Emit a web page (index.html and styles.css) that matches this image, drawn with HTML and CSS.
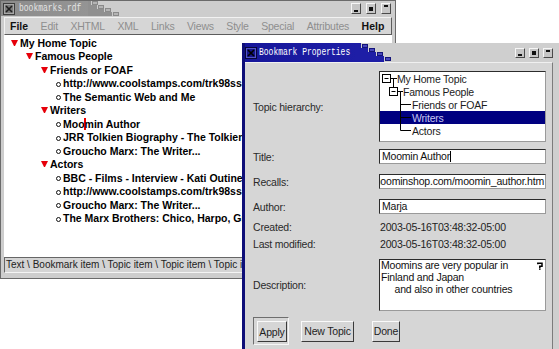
FILE: index.html
```html
<!DOCTYPE html>
<html lang="en">
<head>
    <meta charset="UTF-8">
    <title>bookmarks.rdf</title>
    <link rel="stylesheet" href="styles.css">
</head>
<body>
    <!-- main window -->
    <div class="window main-win">
        <div class="titlebar">
            <div class="caption">
                <svg class="close-box" width="12" height="12" viewBox="0 0 12 12">
                    <rect x="0.5" y="0.5" width="11" height="11" fill="#7c7c7c" stroke="#3e3e3e"/>
                    <rect x="1.5" y="1.5" width="9" height="9" fill="none" stroke="#a8a8a8"/>
                    <path d="M3 3L9 9M9 3L3 9" stroke="#1e1e1e" stroke-width="1.6"/>
                </svg>
                <span class="title">bookmarks.rdf</span>
            </div>
            <svg class="steps" width="32" height="15" viewBox="0 0 32 15">
                <rect width="32" height="15" fill="#cdcdcd"/>
                <path d="M0 0H3V4H9V8H16V11H24V15H0Z" fill="#909090"/>
                <rect x="4.5" y="0.5" width="5" height="3" fill="#b4b4b4" stroke="#8a8a8a"/>
                <rect x="10.5" y="4.5" width="5" height="3" fill="#b4b4b4" stroke="#8a8a8a"/>
                <rect x="17.5" y="7.5" width="5" height="3" fill="#b4b4b4" stroke="#8a8a8a"/>
                <rect x="25.5" y="11.5" width="5" height="3" fill="#b4b4b4" stroke="#8a8a8a"/>
            </svg>
            <div class="fill">
                <span class="tb-btn min"></span>
                <span class="tb-btn max"></span>
                <span class="tb-btn shade"></span>
            </div>
        </div>
        <div class="frame">
            <div class="menubar">
                <span class="menu on">File</span>
                <span class="menu">Edit</span>
                <span class="menu">XHTML</span>
                <span class="menu">XML</span>
                <span class="menu">Links</span>
                <span class="menu">Views</span>
                <span class="menu">Style</span>
                <span class="menu">Special</span>
                <span class="menu">Attributes</span>
                <span class="menu on">Help</span>
            </div>
            <div class="content">
                <ul class="tree">
                    <li><span class="row"><i class="tri"></i>My Home Topic</span>
                        <ul>
                            <li><span class="row"><i class="tri"></i>Famous People</span>
                                <ul>
                                    <li><span class="row"><i class="tri"></i>Friends or FOAF</span>
                                        <ul>
                                            <li><span class="row"><i class="dot"></i>http://www.coolstamps.com/trk98ss-sem.htm</span></li>
                                            <li><span class="row"><i class="dot"></i>The Semantic Web and Me</span></li>
                                        </ul>
                                    </li>
                                    <li><span class="row"><i class="tri"></i>Writers</span>
                                        <ul>
                                            <li><span class="row"><i class="dot"></i>Moo<span class="caret"></span>min Author</span></li>
                                            <li><span class="row"><i class="dot"></i>JRR Tolkien Biography - The Tolkien Society</span></li>
                                            <li><span class="row"><i class="dot"></i>Groucho Marx: The Writer...</span></li>
                                        </ul>
                                    </li>
                                    <li><span class="row"><i class="tri"></i>Actors</span>
                                        <ul>
                                            <li><span class="row"><i class="dot"></i>BBC - Films - Interview - Kati Outinen</span></li>
                                            <li><span class="row"><i class="dot"></i>http://www.coolstamps.com/trk98ss-act.htm</span></li>
                                            <li><span class="row"><i class="dot"></i>Groucho Marx: The Writer...</span></li>
                                            <li><span class="row"><i class="dot"></i>The Marx Brothers: Chico, Harpo, Groucho</span></li>
                                        </ul>
                                    </li>
                                </ul>
                            </li>
                        </ul>
                    </li>
                </ul>
            </div>
            <div class="statusbar">Text \ Bookmark item \ Topic item \ Topic item \ Topic item \ Text</div>
        </div>
    </div>

    <!-- dialog -->
    <div class="window dialog">
        <div class="titlebar">
            <div class="caption">
                <svg class="close-box" width="12" height="12" viewBox="0 0 12 12">
                    <rect x="0.5" y="0.5" width="11" height="11" fill="#16168c" stroke="#07073a"/>
                    <rect x="1.5" y="1.5" width="9" height="9" fill="none" stroke="#5454c4"/>
                    <path d="M3 3L9 9M9 3L3 9" stroke="#000" stroke-width="1.6"/>
                </svg>
                <span class="title">Bookmark Properties</span>
            </div>
            <svg class="steps" width="36" height="19" viewBox="0 0 36 19">
                <rect width="36" height="19" fill="#cfcfcf"/>
                <path d="M0 0H4V5H11V9H19V13H27V19H0Z" fill="#1e1ea6"/>
                <rect x="5.5" y="1.5" width="5" height="3" fill="#4848bc" stroke="#14147a"/>
                <rect x="12.5" y="5.5" width="5" height="3" fill="#4848bc" stroke="#14147a"/>
                <rect x="20.5" y="9.5" width="5" height="3" fill="#4848bc" stroke="#14147a"/>
                <rect x="28.5" y="14.5" width="5" height="3" fill="#4848bc" stroke="#14147a"/>
            </svg>
            <div class="fill">
                <span class="tb-btn min"></span>
                <span class="tb-btn max"></span>
                <span class="tb-btn shade"></span>
            </div>
        </div>
        <div class="dlg-body">
            <div class="field first">
                <label>Topic hierarchy:</label>
                <div class="topic-tree">
                    <div class="node">
                        <svg width="17" height="13" viewBox="0 0 17 13">
                            <rect x="2.5" y="2.5" width="8" height="8" fill="#fff" stroke="#000"/>
                            <path d="M4.5 6.5H8.5M11 6.5H17M13.5 6.5V13" stroke="#000"/>
                        </svg>My Home Topic
                    </div>
                    <div class="node">
                        <svg width="23" height="13" viewBox="0 0 23 13">
                            <path d="M13.5 0V2.5" stroke="#000"/>
                            <rect x="9.5" y="2.5" width="8" height="8" fill="#fff" stroke="#000"/>
                            <path d="M11.5 6.5H15.5M18 6.5H23M20.5 6.5V13" stroke="#000"/>
                        </svg>Famous People
                    </div>
                    <div class="node">
                        <svg width="32" height="13" viewBox="0 0 32 13">
                            <path d="M20.5 0V13M20.5 6.5H31" stroke="#000"/>
                        </svg>Friends or FOAF
                    </div>
                    <div class="node sel">
                        <svg width="32" height="13" viewBox="0 0 32 13">
                            <path d="M20.5 0V13M20.5 6.5H31" stroke="#000"/>
                        </svg>Writers
                    </div>
                    <div class="node">
                        <svg width="32" height="13" viewBox="0 0 32 13">
                            <path d="M20.5 0V6.5H31" stroke="#000" fill="none"/>
                        </svg>Actors
                    </div>
                </div>
            </div>
            <div class="field near">
                <label>Title:</label>
                <div class="entry">Moomin Author<span class="ibeam"></span></div>
            </div>
            <div class="field">
                <label>Recalls:</label>
                <div class="entry scrolled"><span>moominshop.com/moomin_author.htm</span></div>
            </div>
            <div class="field">
                <label>Author:</label>
                <div class="entry">Marja</div>
            </div>
            <div class="field info near-s">
                <label>Created:</label>
                <div class="value">2003-05-16T03:48:32-05:00</div>
            </div>
            <div class="field info tight">
                <label>Last modified:</label>
                <div class="value">2003-05-16T03:48:32-05:00</div>
            </div>
            <div class="field mid">
                <label>Description:</label>
                <div class="memo">
<div class="memo-text">Moomins are very popular in
Finland and Japan
     and also in other countries</div>
                    <svg class="memo-mark" width="6" height="8" viewBox="0 0 6 8">
                        <path d="M0.8 2.2V1.2H5V4.2H2.8V6" stroke="#000" stroke-width="1.5" fill="none"/>
                        <rect x="2" y="6.4" width="1.6" height="1.4" fill="#000"/>
                    </svg>
                </div>
            </div>
            <div class="buttons">
                <div class="default-frame"><button class="btn apply">Apply</button></div>
                <button class="btn new-topic">New Topic</button>
                <button class="btn done">Done</button>
            </div>
        </div>
    </div>
</body>
</html>
```

FILE: styles.css
```css
/* page */
body {
    margin: 0;
    width: 559px;
    height: 349px;
    position: relative;
    overflow: hidden;
    background: #fff;
    font-family: "Liberation Sans", Arial, sans-serif;
    font-size: 10.5px;
    letter-spacing: -0.2px;
    color: #222;
}

/* window chrome */
.window {
    position: absolute;
    box-sizing: border-box;
    display: flex;
    flex-direction: column;
}
.main-win {
    left: 0;
    top: 0;
    width: 396px;
    height: 279px;
    border: 1px solid #6a6a6a;
    background: #cdcdcd;
}
.dialog {
    left: 242px;
    top: 43px;
    width: 317px;
    height: 316px;
    border-left: 3px solid #0e0e78;
    background: #cfcfcf;
}
.titlebar {
    display: flex;
    flex-shrink: 0;
}
.main-win .titlebar { height: 15px; }
.dialog .titlebar { height: 19px; }

.caption {
    display: flex;
    align-items: center;
    overflow: hidden;
}
.main-win .caption {
    width: 85px;
    padding-left: 2px;
    background: linear-gradient(to right, #8c8c8c, #949494);
    color: #e4e4e4;
}
.dialog .caption {
    width: 112px;
    background: linear-gradient(to right, #16169a, #1e1ea6);
    color: #fff;
}
.close-box { flex-shrink: 0; }
.title {
    font-family: "Liberation Mono", monospace;
    font-size: 10px;
    letter-spacing: 0;
    white-space: nowrap;
    transform: scaleX(0.8);
    transform-origin: left center;
}
.main-win .title { margin-left: 4px; }
.dialog .title { margin-left: 2px; }
.steps { flex-shrink: 0; }

.fill {
    flex: 1;
    display: flex;
    justify-content: flex-end;
    align-items: center;
    background: #cdcdcd;
}
.main-win .fill { gap: 5px; padding-right: 4px; }
.dialog .fill { gap: 4px; padding-right: 6px; background: #cfcfcf; }

/* little buttons at the right of a title bar */
.tb-btn {
    width: 10px;
    height: 11px;
    box-sizing: border-box;
    border: 1px solid;
    border-color: #f6f6f6 #4a4a4a #4a4a4a #f6f6f6;
    background: #c6c6c6;
    display: flex;
    justify-content: center;
}
.dialog .tb-btn { height: 10px; }
.tb-btn::after {
    content: "";
    width: 4px;
    height: 2px;
    background: #111;
}
.tb-btn.min { align-items: flex-end; padding-bottom: 1px; }
.tb-btn.max { align-items: center; }
.tb-btn.max::after { height: 4px; }
.tb-btn.shade { align-items: flex-start; padding-top: 1px; }

/* main window body */
.frame {
    flex: 1;
    display: flex;
    flex-direction: column;
    padding: 1px 3px 5px;
}
.menubar {
    height: 18px;
    box-sizing: border-box;
    display: flex;
    align-items: center;
    gap: 12.5px;
    padding-left: 5px;
    border: 1px solid;
    border-color: #f2f2f2 #5c5c5c #5c5c5c #f2f2f2;
    background: #d6d6d6;
    overflow: hidden;
    white-space: nowrap;
}
.menu { color: #8e8e8e; }
.menu.on { color: #111; font-weight: bold; letter-spacing: 0; }

.content {
    height: 222px;
    background: #fff;
    overflow: hidden;
}
.tree,
.tree ul {
    list-style: none;
    margin: 0;
    padding: 0 0 0 15px;
}
.tree {
    padding: 1px 0 0 7px;
    font-weight: bold;
    font-size: 10.5px;
    letter-spacing: 0;
    color: #000;
}
.row {
    display: flex;
    align-items: center;
    height: 13.5px;
    white-space: nowrap;
}
.tri {
    width: 1px;
    height: 0;
    border-left: 3px solid transparent;
    border-right: 3px solid transparent;
    border-top: 6px solid #e6000a;
    margin-right: 2px;
    flex-shrink: 0;
}
.dot {
    width: 5px;
    height: 5px;
    box-sizing: border-box;
    border: 1px solid #111;
    border-radius: 50%;
    margin: 2px 2px 0 0;
    flex-shrink: 0;
}
.caret {
    display: inline-block;
    width: 2px;
    height: 12px;
    margin: 0 -1px;
    background: #e00;
}

.statusbar {
    height: 16px;
    box-sizing: border-box;
    border: 1px solid;
    border-color: #666 #f4f4f4 #f4f4f4 #666;
    background: #d4d4d4;
    padding-left: 1px;
    line-height: 14px;
    font-size: 10px;
    letter-spacing: 0;
    color: #222;
    white-space: nowrap;
    overflow: hidden;
}

/* dialog body */
.dlg-body {
    flex: 1;
    margin-right: 6px;
    padding: 8px 6px 0 8px;
    background: #d6d6d6;
    border-top: 1px solid #f0f0f0;
    border-right: 1px solid #7c7c7c;
}
.field {
    display: flex;
    align-items: center;
    margin-top: 10px;
}
.field.first { margin-top: 0; }
.field.near { margin-top: 7px; }
.field.near-s { margin-top: 6px; }
.field.tight { margin-top: 3px; }
.field.mid { margin-top: 8px; }
.field label {
    width: 126px;
    flex-shrink: 0;
    color: #2a2a2a;
}
.field.info { height: 14px; }

.topic-tree,
.entry,
.memo {
    width: 167px;
    box-sizing: border-box;
    border: 1px solid;
    border-color: #2c2c2c #9a9a9a #9a9a9a #2c2c2c;
    background: #fff;
    overflow: hidden;
}
.topic-tree { height: 71px; }
.node {
    display: flex;
    align-items: center;
    height: 13px;
    white-space: nowrap;
    color: #1c1c1c;
}
.node svg { flex-shrink: 0; }
.node.sel {
    background: #000080;
    color: #c6c6f2;
}

.entry {
    height: 15px;
    padding: 0 1px 0 2px;
    line-height: 13px;
    white-space: nowrap;
    color: #111;
}
.entry.scrolled {
    display: flex;
    justify-content: flex-end;
    padding: 0 1px 0 0;
}
.entry.scrolled span { flex-shrink: 0; }
.ibeam {
    display: inline-block;
    width: 1px;
    height: 11px;
    background: #000;
    vertical-align: -2px;
}
.value {
    padding-left: 1px;
    color: #222;
}

.memo {
    position: relative;
    height: 52px;
    padding: 0 1px;
    line-height: 12px;
    color: #111;
}
.memo-text {
    white-space: pre;
    margin-top: -1px;
}
.memo-mark {
    position: absolute;
    right: 2px;
    top: 2px;
}

/* dialog buttons */
.buttons {
    display: flex;
    align-items: center;
    margin-top: 6px;
}
.default-frame {
    padding: 3px 1px 2px 3px;
    border: 1px solid;
    border-color: #6e6e6e #f6f6f6 #f6f6f6 #6e6e6e;
    margin-right: 12px;
}
.btn {
    height: 21px;
    box-sizing: border-box;
    padding: 0;
    border: 1px solid;
    border-color: #fafafa #3a3a3a #3a3a3a #fafafa;
    background: #d6d6d6;
    font-family: inherit;
    font-size: 10.5px;
    letter-spacing: -0.2px;
    color: #1e1e1e;
}
.btn.apply { display: block; width: 30px; }
.btn.new-topic { width: 53px; margin-right: 18px; }
.btn.done { width: 28px; }
```
